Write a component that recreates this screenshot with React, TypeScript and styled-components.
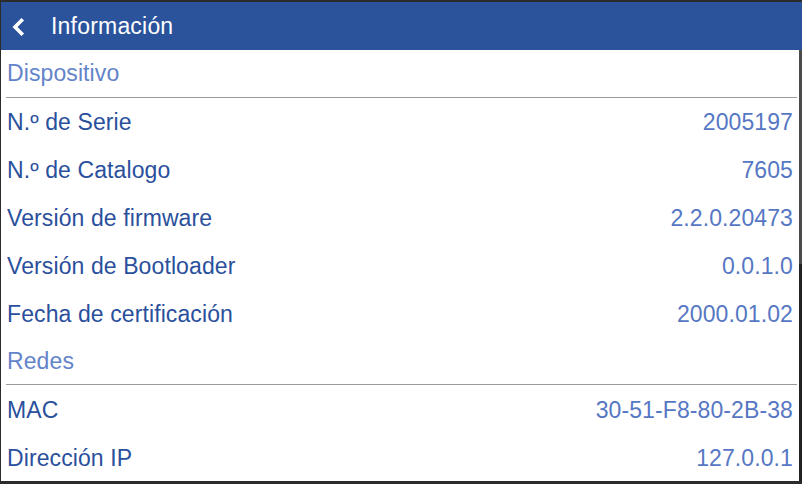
import React from "react";
import styled, { createGlobalStyle } from "styled-components";

const GlobalStyle = createGlobalStyle`
  html, body {
    margin: 0;
    padding: 0;
    background: #2b2b2b;
  }
  body {
    font-family: "Liberation Sans", Arial, sans-serif;
  }
`;

type Row = { label: string; value: string };
type Section = { title: string; rows: Row[] };

const sections: Section[] = [
  {
    title: "Dispositivo",
    rows: [
      { label: "N.º de Serie", value: "2005197" },
      { label: "N.º de Catalogo", value: "7605" },
      { label: "Versión de firmware", value: "2.2.0.20473" },
      { label: "Versión de Bootloader", value: "0.0.1.0" },
      { label: "Fecha de certificación", value: "2000.01.02" },
    ],
  },
  {
    title: "Redes",
    rows: [
      { label: "MAC", value: "30-51-F8-80-2B-38" },
      { label: "Dirección IP", value: "127.0.0.1" },
    ],
  },
];

export default function App() {
  return (
    <>
      <GlobalStyle />
      <Screen>
        <Header>
          <BackButton aria-label="Volver">
            <svg width="14" height="18" viewBox="0 0 14 18">
              <path
                d="M10.5 2.5 L4 9 L10.5 15.5"
                fill="none"
                stroke="#fff"
                strokeWidth="3.6"
                strokeLinecap="square"
              />
            </svg>
          </BackButton>
          <Title>Información</Title>
        </Header>
        <Body>
          <List>
            {sections.map((s) => (
              <React.Fragment key={s.title}>
                <SectionTitle>{s.title}</SectionTitle>
                {s.rows.map((r) => (
                  <ItemRow key={r.label}>
                    <Label>{r.label}</Label>
                    <Value>{r.value}</Value>
                  </ItemRow>
                ))}
              </React.Fragment>
            ))}
          </List>
          <Track>
            <Thumb />
          </Track>
        </Body>
      </Screen>
    </>
  );
}

const Screen = styled.div`
  margin: 2px 0 0 1px;
  width: 801px;
  height: 479px;
  display: flex;
  flex-direction: column;
  background: #fff;
`;

const Header = styled.header`
  height: 48px;
  display: flex;
  align-items: center;
  background: #2a539b;
  color: #fff;
`;

const BackButton = styled.div`
  width: 50px;
  display: flex;
  align-items: center;
  padding: 1px 0 0 10px;
  box-sizing: border-box;
  svg {
    display: block;
  }
`;

const Title = styled.h1`
  margin: 0;
  padding-top: 1px;
  font-size: 23px;
  font-weight: 400;
  letter-spacing: 0.2px;
`;

const Body = styled.div`
  flex: 1;
  display: flex;
  min-height: 0;
`;

const List = styled.div`
  flex: 1;
  display: flex;
  flex-direction: column;
`;

const SectionTitle = styled.div`
  height: 48px;
  box-sizing: border-box;
  margin: 0 2px 0 5px;
  padding: 1px 0 0 1px;
  display: flex;
  align-items: center;
  border-bottom: 1px solid #9a9a9a;
  font-size: 23px;
  letter-spacing: 0.1px;
  color: #6384c9;
`;

const ItemRow = styled.div`
  height: 48px;
  box-sizing: border-box;
  padding: 2px 6px 0;
  display: flex;
  align-items: center;
  justify-content: space-between;
  font-size: 23px;
  letter-spacing: 0.1px;
`;

const Label = styled.span`
  color: #2a509c;
`;

const Value = styled.span`
  color: #5677c3;
`;

const Track = styled.div`
  width: 3px;
  background: #222;
`;

const Thumb = styled.div`
  height: 214px;
  background: #4a4a4a;
`;
